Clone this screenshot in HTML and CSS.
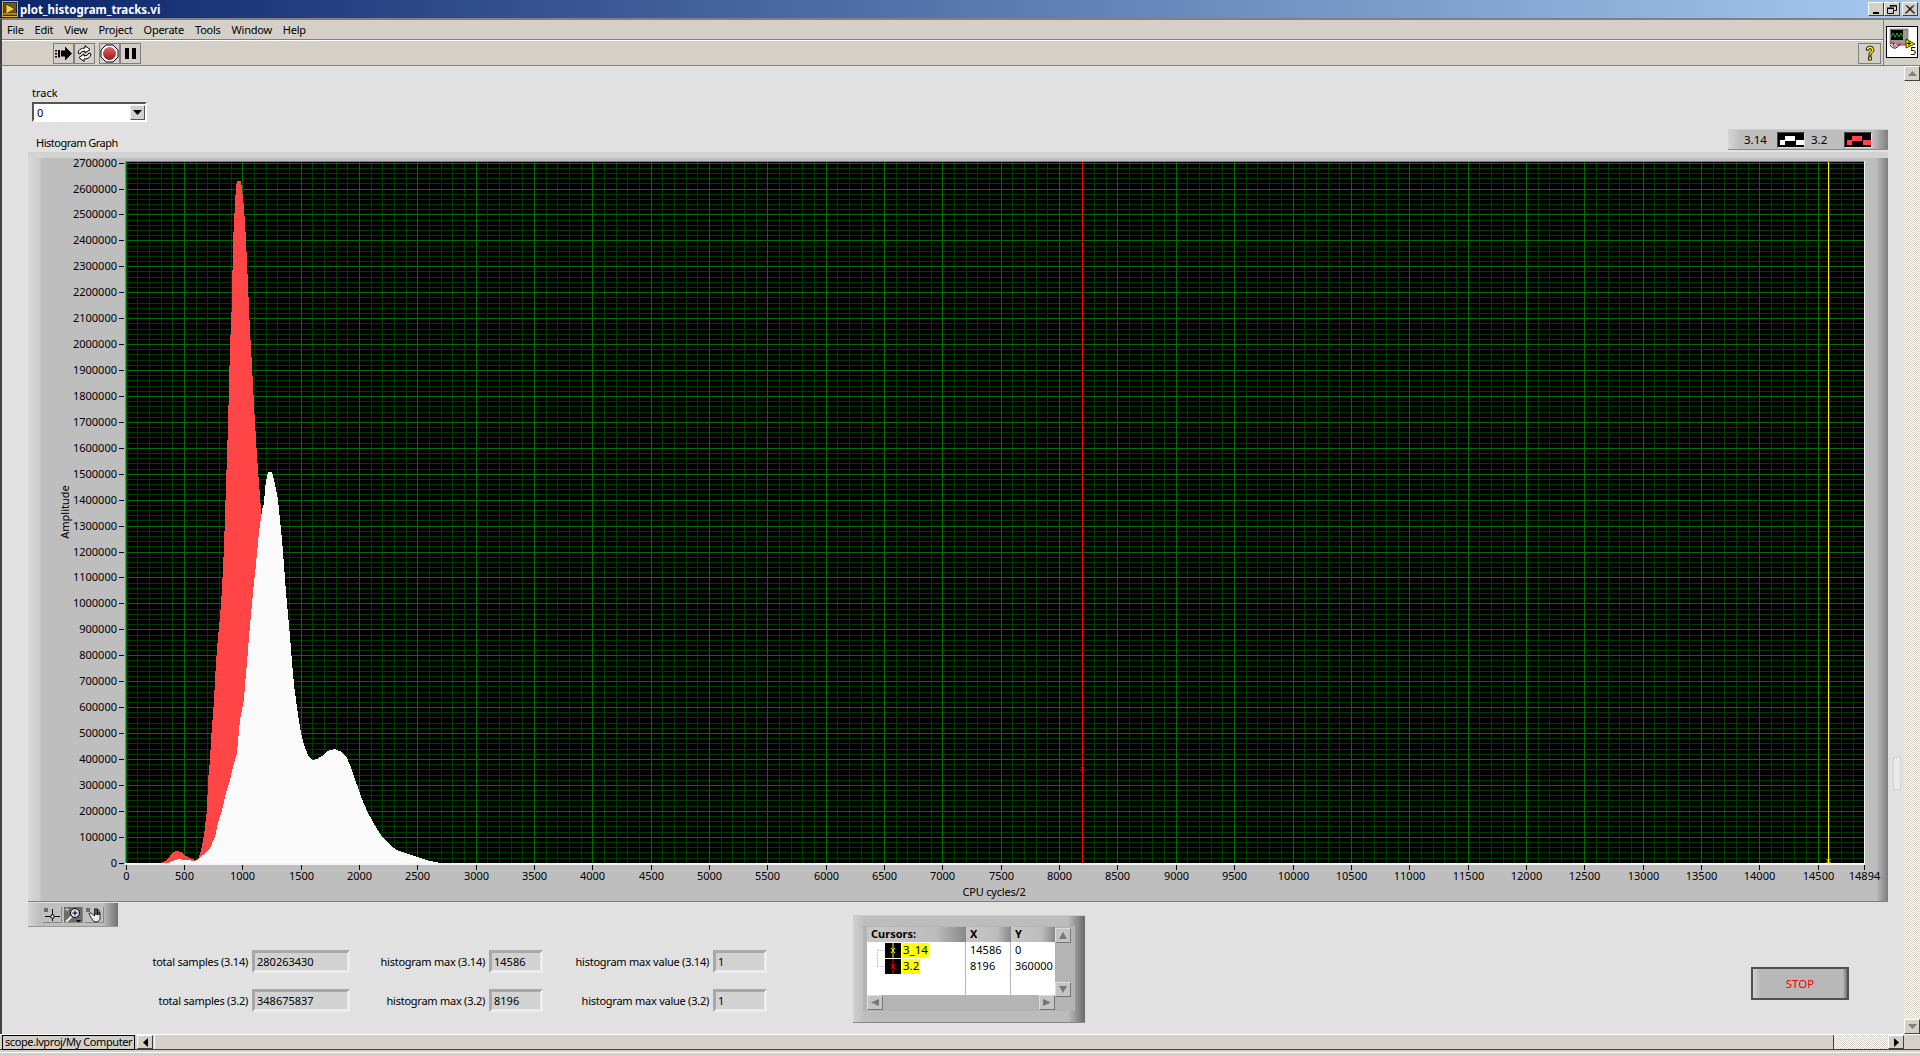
FILE: index.html
```html
<!DOCTYPE html>
<html lang="en">
<head>
    <meta charset="UTF-8">
    <title>plot_histogram_tracks.vi</title>
    <link rel="stylesheet" href="styles.css">
</head>
<body>
    <div class="titlebar">
        <svg class="title-icon" width="16" height="16" viewBox="0 0 16 16">
            <rect x="0.5" y="0.5" width="15" height="15" fill="#2b2b2b" stroke="#e0b030"/>
            <rect x="2" y="2" width="12" height="12" fill="#6a5a20"/>
            <path d="M4 3 L13 8 L4 13 Z" fill="#f4d040" stroke="#000" stroke-width="0.6"/>
            <path d="M1 13 H15" stroke="#e0b030"/>
        </svg>
        <span class="title-text">plot_histogram_tracks.vi</span>
        <div class="win-btns">
            <button class="win-btn"><svg width="9" height="9"><rect x="1" y="7" width="6" height="2" fill="#000"/></svg></button>
            <button class="win-btn"><svg width="10" height="9"><path d="M3.5 2.5 V0.5 H9.5 V5.5 H7.5 M0.5 3.5 H6.5 V8.5 H0.5 Z M3 1 H9 M0 3 H7" fill="none" stroke="#000"/></svg></button>
            <button class="win-btn win-close"><svg width="10" height="9"><path d="M1 0.5 L9 8.5 M2 0.5 L10 8.5 M9 0.5 L1 8.5 M8 0.5 L0 8.5" stroke="#000"/></svg></button>
        </div>
    </div>

    <div class="chrome">
        <div class="chrome-main">
            <div class="menubar">
                <span>File</span><span>Edit</span><span>View</span><span>Project</span><span>Operate</span><span>Tools</span><span>Window</span><span>Help</span>
            </div>
            <div class="toolbar">
                <div class="tool-group">
                    <button class="tool-btn">
                        <svg width="19" height="19" viewBox="0 0 19 19"><path d="M1 6h2v1.500H1zM1 9h2v1.500H1zM1 12h2v1.500H1zM4 6h2v7.500H4z" fill="#000"/><path d="M7 6.500h4V2.500l7 7-7 7v-4H7z" fill="#000"/></svg>
                    </button>
                    <button class="tool-btn">
                        <svg width="19" height="19" viewBox="0 0 19 19"><path d="M3 9 Q4 4 10 4 V1.500 L15 5.500 L10 9 V7 Q6 7 5 10 Z" fill="#fff" stroke="#000"/><path d="M16 10 Q15 15 9 15 V17.500 L4 13.500 L9 10 V12 Q13 12 14 9 Z" fill="#fff" stroke="#000"/></svg>
                    </button>
                </div>
                <div class="tool-group">
                    <button class="tool-btn">
                        <svg width="19" height="19" viewBox="0 0 19 19"><defs><linearGradient id="stopfill" x1="0" y1="0" x2="0" y2="1"><stop offset="0" stop-color="#d86a6a"/><stop offset="1" stop-color="#a01818"/></linearGradient></defs><path d="M6 1h7l5 5v7l-5 5H6l-5-5V6z" fill="#fff" stroke="#000"/><circle cx="9.500" cy="9.500" r="6.500" fill="url(#stopfill)"/></svg>
                    </button>
                    <button class="tool-btn">
                        <svg width="19" height="19" viewBox="0 0 19 19"><path d="M4 4h4v11H4zM11 4h4v11h-4z" fill="#000"/></svg>
                    </button>
                </div>
                <button class="help-btn">
                    <svg width="18" height="18" viewBox="0 0 18 18"><path d="M5 6 Q5 2 9 2 Q13 2 13 6 Q13 8 10 10 V12 H8 V9 Q10.500 7.500 10.500 6 Q10.500 4.500 9 4.500 Q7.500 4.500 7.500 6.500 Z" fill="#ffee00" stroke="#000" stroke-width="0.8"/><rect x="7.500" y="13" width="3" height="3" fill="#ffee00" stroke="#000" stroke-width="0.8"/></svg>
                </button>
            </div>
        </div>
        <div class="vi-pane">
            <svg class="vi-icon" width="32" height="32" viewBox="0 0 32 32">
                <rect x="0.500" y="0.500" width="31" height="31" fill="#fff" stroke="#000"/>
                <rect x="4" y="3" width="18" height="15" fill="#999" stroke="#444" stroke-width="0.5"/>
                <rect x="5" y="4" width="12" height="10" fill="#000"/>
                <path d="M5 11 L7 7 L9 11 L11 7 L13 11 L15 7 L17 11" fill="none" stroke="#00c000"/>
                <path d="M4 17 H8 L7 20 H10 M10 19 H25" fill="none" stroke="#f00"/>
                <path d="M4 19 Q9 26 14 18" fill="none" stroke="#00a"/>
                <path d="M20 13 L29 18 L20 22 Z" fill="#f4d800" stroke="#000" stroke-width="0.7"/>
                <path d="M21 17.500h4M23 15.500v4" stroke="#000"/>
                <text x="24" y="29" class="vi-num">5</text>
            </svg>
        </div>
    </div>

    <div class="workspace">
        <div class="panel">
            <div class="track">
                <div class="track-label">track</div>
                <div class="ring">
                    <span class="ring-value">0</span>
                    <span class="ring-btn"><svg width="9" height="5"><path d="M0 0h9L4.500 5z" fill="#000"/></svg></span>
                </div>
            </div>

            <div class="graph-head">
                <span class="graph-label">Histogram Graph</span>
                <div class="legend">
                    <span class="legend-name">3.14</span>
                    <svg class="legend-swatch" width="28" height="16"><path d="M2 7h5v5H2zM7 3h10v5H7zM18 7h9v5h-9z" fill="#fff"/></svg>
                    <span class="legend-name">3.2</span>
                    <svg class="legend-swatch" width="28" height="16"><path d="M2 7h5v5H2zM7 3h10v5H7zM18 7h9v5h-9z" fill="#ff4545"/></svg>
                </div>
            </div>

            <div class="graph">
                <svg id="plot" width="1860" height="750" viewBox="28 152 1860 750"></svg>
            </div>

            <div class="lower">
                <div class="lower-left">
                    <div class="palette">
                        <button class="pal-btn">
                            <svg width="18" height="16" viewBox="0 0 18 16"><rect x="1" y="1" width="4" height="4" fill="#5a7a50"/><path d="M9.500 2v12M2 9.500h15" stroke="#000"/><circle cx="9.500" cy="9.500" r="1.800" fill="#ddd" stroke="#000"/></svg>
                        </button>
                        <button class="pal-btn pal-on">
                            <svg width="18" height="16" viewBox="0 0 18 16"><path d="M1 2.500h4M3 .5v4" stroke="#6f6"/><circle cx="11" cy="6" r="4.500" fill="#dde" stroke="#000"/><path d="M8.500 6h5M11 3.500v5" stroke="#000"/><path d="M7.500 9.500L2 15" stroke="#eee" stroke-width="2"/><path d="M12 13h5l-2.500 2.500z" fill="#000"/></svg>
                        </button>
                        <button class="pal-btn">
                            <svg width="18" height="16" viewBox="0 0 18 16"><rect x="1" y="1" width="4" height="4" fill="#5a7a50"/><path d="M4 7l3 5q1 3 4 3t4-3V6q0-1.500-1-1v3-5q-1-1-1.500 0v5-6q-1-1-1.500 0v6-6q-1-1-1.500 0v7L6 6q-2-.5-2 1z" fill="#eee" stroke="#000" stroke-width="0.8"/></svg>
                        </button>
                    </div>
                    <div class="readouts">
                        <div class="readout"><span class="readout-name">total samples (3.14)</span><span class="readout-box">280263430</span></div>
                        <div class="readout"><span class="readout-name">histogram max (3.14)</span><span class="readout-box short">14586</span></div>
                        <div class="readout"><span class="readout-name">histogram max value (3.14)</span><span class="readout-box short">1</span></div>
                        <div class="readout"><span class="readout-name">total samples (3.2)</span><span class="readout-box">348675837</span></div>
                        <div class="readout"><span class="readout-name">histogram max (3.2)</span><span class="readout-box short">8196</span></div>
                        <div class="readout"><span class="readout-name">histogram max value (3.2)</span><span class="readout-box short">1</span></div>
                    </div>
                </div>

                <div class="cursors">
                    <div class="cursors-inner">
                        <div class="cursors-table">
                            <div class="cur-head">
                                <span class="cur-h cur-h-name">Cursors:</span>
                                <span class="cur-h cur-h-x">X</span>
                                <span class="cur-h cur-h-y">Y</span>
                            </div>
                            <div class="cur-body">
                                <div class="cur-tree"></div>
                                <div class="cur-row">
                                    <span class="cur-name">
                                        <svg class="cur-mark" width="16" height="15"><rect width="16" height="15"/><path d="M8 0v15" stroke="#ff0"/><path d="M6 5l4 5M10 5l-4 5" stroke="#ff0"/></svg>
                                        <span class="cur-tag">3_14</span>
                                    </span>
                                    <span class="cur-x">14586</span>
                                    <span class="cur-y">0</span>
                                </div>
                                <div class="cur-row">
                                    <span class="cur-name">
                                        <svg class="cur-mark" width="16" height="15"><rect width="16" height="15"/><path d="M8 0v15" stroke="#f00"/><path d="M6 5l4 5M10 5l-4 5" stroke="#f00"/></svg>
                                        <span class="cur-tag">3.2</span>
                                    </span>
                                    <span class="cur-x">8196</span>
                                    <span class="cur-y">360000</span>
                                </div>
                            </div>
                            <div class="cur-hbar">
                                <span class="cur-arrow"><svg width="8" height="7"><path d="M0 3.500L8 0v7z" fill="#777"/></svg></span>
                                <span class="cur-arrow"><svg width="8" height="7"><path d="M8 3.500L0 0v7z" fill="#777"/></svg></span>
                            </div>
                        </div>
                        <div class="cur-vbar">
                            <span class="cur-arrow"><svg width="8" height="7"><path d="M4 0L0 7h8z" fill="#777"/></svg></span>
                            <span class="cur-arrow"><svg width="8" height="7"><path d="M4 7L0 0h8z" fill="#777"/></svg></span>
                        </div>
                    </div>
                </div>

                <button class="stop-btn">STOP</button>
            </div>
            <div class="panel-grip"></div>
        </div>

        <div class="vscroll">
            <button class="sb-btn"><svg width="9" height="5"><path d="M4.500 0L9 5H0z" fill="#808080"/></svg></button>
            <div class="vscroll-track"></div>
            <button class="sb-btn"><svg width="9" height="5"><path d="M4.500 5L9 0H0z" fill="#808080"/></svg></button>
        </div>
    </div>

    <div class="statusbar">
        <span class="context">scope.lvproj/My Computer</span>
        <button class="sb-btn"><svg width="5" height="9"><path d="M0 4.500L5 0v9z" fill="#000"/></svg></button>
        <div class="hthumb"></div>
        <div class="hgap"></div>
        <button class="sb-btn"><svg width="5" height="9"><path d="M5 4.500L0 0v9z" fill="#000"/></svg></button>
        <div class="corner"></div>
    </div>
    <div class="win-bottom"></div>

    <script src="graph.js"></script>
</body>
</html>
```

FILE: styles.css
```css
* {
    box-sizing: border-box;
}

html, body {
    margin: 0;
    padding: 0;
}

body {
    width: 1920px;
    height: 1056px;
    overflow: hidden;
    display: flex;
    flex-direction: column;
    font-family: "Noto Sans", "Liberation Sans", sans-serif;
    font-size: 11px;
    color: #000;
    background-color: #d4d0c8;
}

button {
    margin: 0;
    padding: 0;
    font: inherit;
}

/* title bar */
.titlebar {
    height: 18px;
    flex: none;
    display: flex;
    align-items: center;
    padding: 0 2px;
    background: linear-gradient(to right, #0a246a, #a6caf0);
}

.title-icon {
    flex: none;
}

.title-text {
    margin-left: 2px;
    color: #fff;
    font-weight: bold;
    font-size: 11.5px;
}

.win-btns {
    margin-left: auto;
    display: flex;
}

.win-btn {
    width: 16px;
    height: 14px;
    display: flex;
    align-items: center;
    justify-content: center;
    background-color: #d4d0c8;
    border: 1px solid;
    border-color: #fff #404040 #404040 #fff;
}

.win-close {
    margin-left: 2px;
}

/* menu + toolbar */
.chrome {
    height: 48px;
    flex: none;
    display: flex;
    border-top: 2px solid #808080;
    border-left: 2px solid #404040;
    border-bottom: 1px solid #808080;
}

.chrome-main {
    flex: 1;
    display: flex;
    flex-direction: column;
}

.menubar {
    height: 20px;
    display: flex;
    align-items: center;
    gap: 11px;
    padding-left: 5px;
    letter-spacing: -0.25px;
    border-bottom: 1px solid #808080;
}

.toolbar {
    flex: 1;
    display: flex;
    align-items: center;
    gap: 4px;
    padding-left: 51px;
    padding-right: 2px;
    border-top: 1px solid #fff;
}

.tool-group {
    display: flex;
}

.tool-btn {
    width: 21px;
    height: 21px;
    display: flex;
    align-items: center;
    justify-content: center;
    background-color: #d4d0c8;
    border: 1px solid #808080;
}

.help-btn {
    margin-left: auto;
    width: 23px;
    height: 21px;
    display: flex;
    align-items: center;
    justify-content: center;
    background-color: #d4d0c8;
    border: 1px solid #808080;
}

.vi-pane {
    width: 37px;
    flex: none;
    padding: 6px 0 0 2px;
    border-left: 1px solid #808080;
}

.vi-icon {
    display: block;
}

.vi-num {
    font-size: 11px;
}

/* front panel */
.workspace {
    flex: 1;
    display: flex;
    min-height: 0;
    border-left: 2px solid #404040;
}

.panel {
    position: relative;
    flex: 1;
    padding: 21px 0 0 26px;
    background-color: #e1e1e1;
}

.panel-grip {
    position: absolute;
    left: 1891px;
    top: 691px;
    width: 8px;
    height: 33px;
    background-color: #e9e9e9;
    border: 1px solid #d2d2d2;
}

.track {
    margin-left: 4px;
    width: 115px;
}

.track-label {
    height: 15px;
    line-height: 11px;
}

.ring {
    height: 20px;
    display: flex;
    align-items: center;
    padding-left: 3px;
    background-color: #fff;
    border: 2px solid;
    border-color: #555 #fff #fff #555;
}

.ring-value {
    flex: 1;
}

.ring-btn {
    width: 15px;
    height: 15px;
    display: flex;
    align-items: center;
    justify-content: center;
    margin-right: 0;
    background-color: #d0d0d0;
    border: 1px solid;
    border-color: #eee #555 #555 #eee;
}

.graph-head {
    width: 1860px;
    height: 23px;
    margin-top: 7px;
    display: flex;
    justify-content: space-between;
}

.graph-label {
    margin: 7px 0 0 8px;
    line-height: 14px;
    letter-spacing: -0.5px;
}

.legend {
    width: 160px;
    height: 21px;
    display: flex;
    align-items: center;
    padding-left: 16px;
    background-color: #bebebe;
    background-image: linear-gradient(to right, #d6d6d6, #bebebe 12px, #bebebe 145px, #808080);
    border-top: 1px solid #cfcfcf;
    border-bottom: 1px solid #8a8a8a;
}

.legend-name {
    font-size: 11.5px;
    width: 33px;
}

.legend-swatch {
    background-color: #000;
    border: 1px solid;
    border-color: #444 #ddd #ddd #444;
    margin-right: 6px;
}

.graph {
    width: 1860px;
    height: 750px;
    background-color: #bebebe;
    background-image:
        linear-gradient(to bottom, #d2d2d2 0, #d2d2d2 6px, transparent 6px),
        linear-gradient(to right, #d8d8d8 0, #cccccc 12px, #bebebe 13px, #bebebe 1848px, #7c7c7c 1860px);
    border-bottom: 1px solid #808080;
}

#plot {
    display: block;
}

#plot text {
    font-family: "Noto Sans", "Liberation Sans", sans-serif;
    font-size: 11px;
    fill: #000;
}

.lower {
    display: flex;
    align-items: flex-start;
    margin-top: 1px;
}

.lower-left {
    width: 739px;
    flex: none;
}

.palette {
    width: 90px;
    height: 24px;
    display: flex;
    align-items: center;
    gap: 2px;
    padding-left: 15px;
    background-image: linear-gradient(to right, #d4d4d4, #bebebe 12px, #bebebe 75px, #707070);
    border-bottom: 1px solid #999;
}

.pal-btn {
    width: 19px;
    height: 16px;
    display: flex;
    background-color: #c0c0c0;
    border: 0;
    border-bottom: 1px solid #888;
    border-right: 1px solid #888;
}

.pal-on {
    background-color: #6c6c6c;
}

.readouts {
    width: 667px;
    margin: 23px 0 0 72px;
    display: grid;
    grid-template-columns: 250px 193px 224px;
    row-gap: 16px;
}

.readout {
    display: flex;
    justify-content: flex-end;
    align-items: center;
    gap: 4px;
    height: 23px;
}

.readout-name {
    letter-spacing: -0.25px;
}

.readout-box {
    width: 98px;
    height: 23px;
    line-height: 17px;
    padding-left: 2px;
    background-color: #d2d2d2;
    border: 3px solid;
    border-color: #a8a8a8 #ececec #ececec #a8a8a8;
}

.readout-box.short {
    width: 54px;
}

/* cursor legend */
.cursors {
    width: 232px;
    height: 108px;
    margin: 12px 0 0 86px;
    flex: none;
    padding: 10px;
    background-color: #bcbcbc;
    background-image: linear-gradient(to right, #d0d0d0, #bcbcbc 12px, #bcbcbc 215px, #6a6a6a);
    border-top: 1px solid #ccc;
    border-bottom: 1px solid #888;
}

.cursors-inner {
    display: flex;
    padding-left: 4px;
    height: 85px;
    background-color: #b4b4b4;
}

.cursors-table {
    width: 188px;
    flex: none;
    display: flex;
    flex-direction: column;
}

.cur-head {
    height: 15px;
    display: grid;
    grid-template-columns: 99px 45px 44px;
    font-weight: bold;
    margin-top: 1px;
}

.cur-h {
    padding-left: 4px;
    line-height: 14px;
    background-image: linear-gradient(to right, #c8c8c8, #bcbcbc 70%, #888);
}

.cur-body {
    position: relative;
    flex: 1;
    background-color: #fff;
    background-image: linear-gradient(#b4b4b4, #b4b4b4), linear-gradient(#b4b4b4, #b4b4b4);
    background-size: 1px 100%;
    background-position: 98px 0, 143px 0;
    background-repeat: no-repeat;
}

.cur-tree {
    position: absolute;
    left: 10px;
    top: 8px;
    width: 8px;
    height: 17px;
    border: 1px dotted #bbb;
    border-right: 0;
}

.cur-row {
    height: 16px;
    display: grid;
    grid-template-columns: 99px 45px 44px;
    align-items: center;
}

.cur-name {
    display: flex;
    padding-left: 18px;
}

.cur-mark {
    display: block;
}

.cur-tag {
    height: 15px;
    line-height: 14px;
    padding: 0 1px;
    margin-left: 1px;
    background-color: #ffff00;
    font-size: 11.5px;
}

.cur-x, .cur-y {
    padding-left: 4px;
    line-height: 14px;
}

.cur-hbar {
    height: 16px;
    display: flex;
    justify-content: space-between;
    background-color: #b4b4b4;
}

.cur-vbar {
    width: 16px;
    height: 69px;
    margin-top: 2px;
    flex: none;
    display: flex;
    flex-direction: column;
    justify-content: space-between;
    background-color: #b4b4b4;
}

.cur-arrow {
    width: 16px;
    height: 15px;
    display: flex;
    align-items: center;
    justify-content: center;
    background-color: #c4c4c4;
    border: 1px solid;
    border-color: #ddd #777 #777 #ddd;
}

.stop-btn {
    width: 98px;
    height: 33px;
    margin: 64px 0 0 666px;
    flex: none;
    color: #ff0000;
    font-size: 11.5px;
    background-color: #b8b8b8;
    background-image: linear-gradient(to right, #d4d4d4, #b8b8b8 7px, #b8b8b8 90px, #707070);
    border: 2px solid #505050;
}

/* scrollbars */
.sb-btn {
    width: 16px;
    height: 15px;
    flex: none;
    display: flex;
    align-items: center;
    justify-content: center;
    background-color: #d4d0c8;
    border: 1px solid;
    border-color: #fff #404040 #404040 #fff;
}

.vscroll {
    width: 16px;
    flex: none;
    display: flex;
    flex-direction: column;
}

.vscroll-track, .hgap {
    flex: 1;
    background: repeating-conic-gradient(#d4d0c8 0 25%, #fff 0 50%) 0 0 / 2px 2px;
}

.statusbar {
    height: 16px;
    flex: none;
    display: flex;
    padding-left: 2px;
    border-top: 1px solid #fff;
    border-bottom: 1px solid #404040;
}

.context {
    width: 133px;
    height: 15px;
    line-height: 12px;
    padding-left: 2px;
    white-space: nowrap;
    overflow: hidden;
    letter-spacing: -0.4px;
    background-color: #d4d0c8;
    border: 1px solid #000;
    margin-right: 2px;
}

.hthumb {
    width: 1680px;
    margin-left: 1px;
    background-color: #d4d0c8;
    border-right: 1px solid #404040;
    border-left: 1px solid #fff;
}

.corner {
    width: 16px;
    flex: none;
}

.statusbar .sb-btn {
    height: 14px;
}

.win-bottom {
    flex: none;
    height: 6px;
    background-image: linear-gradient(to bottom, #d4d0c8 0, #d4d0c8 2px, #fff 2px, #fff 3px, #d4d0c8 3px);
}
```

FILE: graph.js
```js
// histogram graph: grid, axes, cursors and the two plots
const plot = document.getElementById('plot');

const left = 125.5, right = 1864, top_ = 162, bottom = 863;
const xPerUnit = 0.1167;
const yPer100k = 25.93;
const xPos = (v) => Math.round(left + v * xPerUnit) + 0.5;
const yPos = (v) => Math.round(862.7 - (v / 100000) * yPer100k) + 0.5;

let out = `<rect x="125" y="${top_}" width="${right - 125}" height="${bottom - top_}" fill="#000"/>`;

function line(x1, y1, x2, y2, color) {
    return `<line x1="${x1}" y1="${y1}" x2="${x2}" y2="${y2}" stroke="${color}" shape-rendering="crispEdges"/>`;
}

// minor grid first so the major lines sit on top
for (let v = 0; v <= 14894; v += 100) {
    if (v % 500 !== 0) out += line(xPos(v), top_, xPos(v), bottom, '#003c00');
}
for (let v = 0; v <= 2700000; v += 20000) {
    if (v % 100000 !== 0) out += line(125, yPos(v), right, yPos(v), '#003c00');
}
for (let v = 0; v <= 14894; v += 500) {
    out += line(xPos(v), top_, xPos(v), bottom, '#006e00');
}
for (let v = 0; v <= 2700000; v += 100000) {
    out += line(125, yPos(v), right, yPos(v), '#006e00');
}

const red = [
    [161, 863], [165, 861], [170, 856], [173, 852], [177, 851], [181, 852], [186, 856], [190, 858], [195, 860], [198, 859],
    [201, 851], [204, 835], [207, 810], [208, 780], [210, 760], [211, 740], [214, 700], [216, 662], [218, 637], [220, 617],
    [222, 589], [224, 546], [226, 486], [228, 425], [230, 347], [232, 300], [233, 242], [235, 203], [236, 188], [237, 181],
    [241, 181], [242, 189], [244, 208], [246, 240], [248, 285], [250, 331], [252, 366], [254, 405], [256, 440], [258, 471],
    [261, 509], [270, 600], [270, 863]
];
const white = [
    [168, 863], [172, 861], [178, 859], [186, 860], [195, 861], [197, 860], [203, 855], [210, 848], [215, 837], [218, 823],
    [222, 810], [226, 793], [230, 780], [233, 767], [237, 753], [240, 720], [244, 700], [245, 685], [247, 662], [249, 637], [251, 615],
    [253, 592], [255, 574], [257, 553], [259, 532], [262, 510], [264, 503], [265, 489], [266, 481], [268, 472],
    [272, 472], [274, 480], [276, 489], [278, 500], [280, 520], [282, 540], [284, 565], [286, 593], [288, 614], [290, 637],
    [292, 662], [294, 685], [296, 700], [298, 715], [301, 733], [304, 745], [308, 755], [312, 760], [317, 759], [322, 756],
    [327, 751], [335, 749], [342, 752], [347, 758], [352, 770], [357, 785], [362, 799], [367, 811], [372, 820], [377, 829], [383, 838],
    [390, 845], [397, 850], [417, 857], [430, 861], [441, 863]
];
const pts = (arr) => arr.map((p) => p.join(',')).join(' ');
out += `<polygon points="${pts(red)}" fill="#ff4545" shape-rendering="crispEdges"/>`;
out += `<polygon points="${pts(white)}" fill="#fafafa" shape-rendering="crispEdges"/>`;

// cursors
const cursorRed = xPos(8196), cursorYellow = xPos(14586);
out += line(cursorRed, top_, cursorRed, bottom, '#ff0000');
out += `<path d="M${cursorRed - 2} 767l4 4m0 -4l-4 4" stroke="#ff0000" fill="none"/>`;
out += line(cursorYellow, top_, cursorYellow, bottom, '#ffff00');
out += `<path d="M${cursorYellow - 2} 859l4 4m0 -4l-4 4" stroke="#ffff00" fill="none"/>`;

// plot frame
out += line(125, 161.5, right + 1, 161.5, '#808080');
out += line(125.5, 161, 125.5, bottom, '#808080');
out += `<rect x="125" y="${bottom}" width="${right - 124}" height="2" fill="#f4f4f4"/>`;
out += `<rect x="${right}" y="161" width="1" height="${bottom - 159}" fill="#f4f4f4"/>`;

// y axis
for (let v = 0; v <= 2700000; v += 100000) {
    const y = yPos(v);
    out += line(119, y, 124, y, '#000');
    out += `<text x="117" y="${y + 3}" text-anchor="end">${v}</text>`;
}

// x axis
const xTicks = [];
for (let v = 0; v <= 14500; v += 500) xTicks.push(v);
xTicks.push(14894);
xTicks.forEach((v) => {
    const x = xPos(v);
    out += line(x, 865, x, 870, '#000');
    out += `<text x="${x}" y="880" text-anchor="middle">${v}</text>`;
});

out += `<text x="994" y="896" text-anchor="middle" letter-spacing="-0.2">CPU cycles/2</text>`;
out += `<text transform="translate(69 512) rotate(-90)" text-anchor="middle">Amplitude</text>`;

plot.innerHTML = out;
```
